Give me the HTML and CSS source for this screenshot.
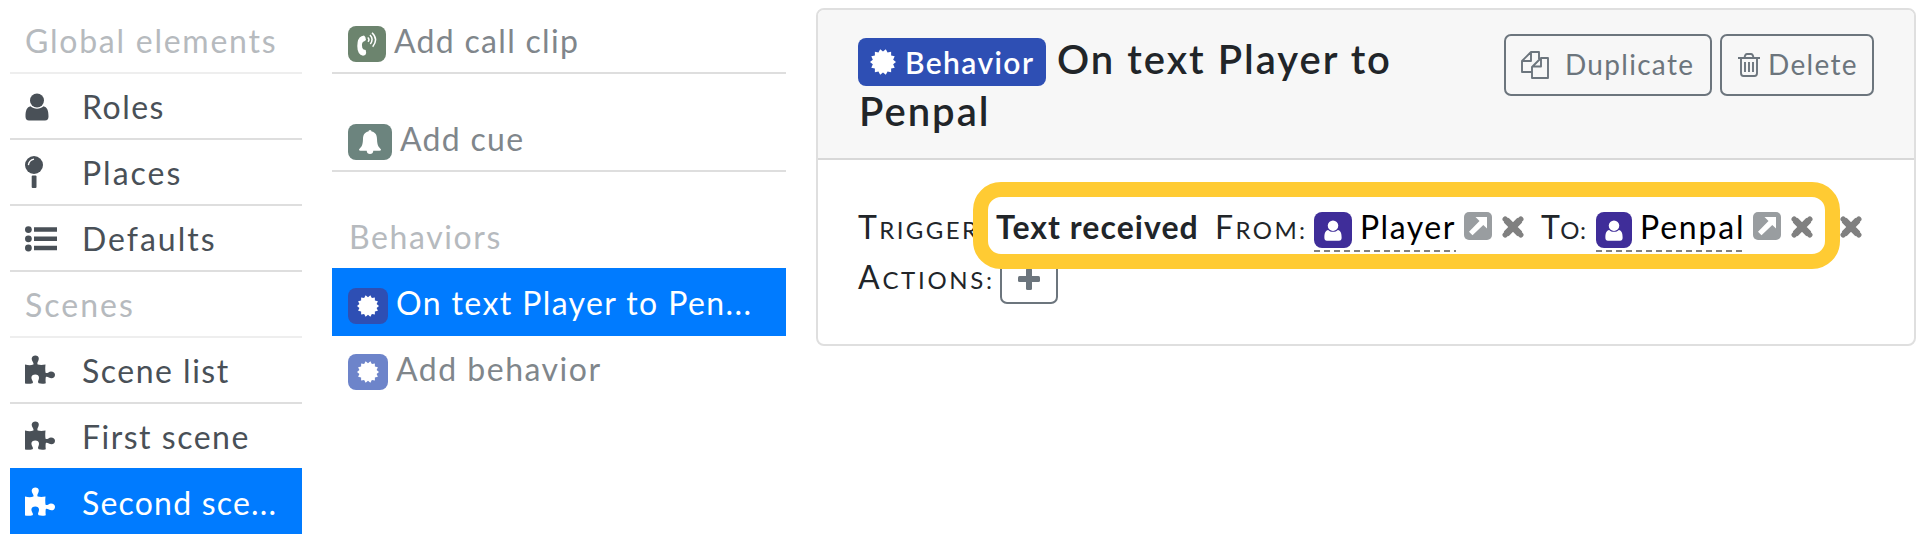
FILE: index.html
```html
<!DOCTYPE html>
<html lang="en">
<head>
<meta charset="utf-8">
<title>Scene editor</title>
<link rel="stylesheet" href="styles.css">
</head>
<body>
<svg class="defs" width="0" height="0">
  <symbol id="user" viewBox="0 0 24 28"><circle cx="12" cy="7.500" r="7"/><path d="M5.500 13.200C8.500 16.500 15.500 16.500 18.500 13.200C22 14 23.500 17 23.500 23.500Q23.500 27.500 20 27.500H4Q.5 27.500 .5 23.500C.5 17 2 14 5.500 13.200Z"/></symbol>
  <symbol id="pin" viewBox="0 0 18 32"><circle cx="9" cy="9" r="9"/><rect x="6.700" y="19.500" width="4.800" height="12.500" rx="1"/><path d="M3.400 9.200Q4 4.200 9 3.200" fill="none" stroke="#fff" stroke-width="1.300"/></symbol>
  <symbol id="list" viewBox="0 0 32 26"><circle cx="3.400" cy="3.600" r="3.400"/><circle cx="3.400" cy="12.800" r="3.400"/><circle cx="3.400" cy="22" r="3.400"/><path d="M9 1.300h23v4.500H9zM9 10.500h23V15H9zM9 19.700h23v4.500H9z"/></symbol>
  <symbol id="puzzle" viewBox="0 0 30 29"><path d="M0 9.500Q5 10.800 8.300 9.600C9.500 8.500 6.500 6 6.700 3.600C6.900 1.300 8.500 .5 10.300 .5C12.300 .5 13.800 1.500 13.800 3.600C13.800 6 11.500 8 12.700 9.500Q16 10.300 20.500 9.500Q20 14 20.500 17.500C21.700 19 23.500 16.700 26 16.400C28.500 16.400 30 17.700 30 19.800C30 22 28.700 23.300 26.500 23.300C24 23.300 22.500 20.800 20.800 22Q20.300 25 20.800 28.200Q17.500 29.200 13.700 28.300C12 26.500 14 25.300 14 22.700C14 20.500 12.500 19.400 10.300 19.400C8 19.400 6.400 20.500 6.400 22.700C6.400 25.200 9 26.700 7.500 28.300Q4 29.200 0 28.500Z"/></symbol>
  <symbol id="burst" viewBox="-12 -12 24 24"><path d="M0-9.600 2.600-11.700 4.200-8.700 7.500-9.400 7.500-6 10.800-5.200 9.400-2.100 12 0 9.400 2.100 10.800 5.200 7.500 6 7.500 9.400 4.200 8.700 2.600 11.700 0 9.600-2.600 11.700-4.200 8.700-7.500 9.400-7.500 6-10.800 5.200-9.400 2.100-12 0-9.400-2.100-10.800-5.200-7.500-6-7.500-9.400-4.200-8.700-2.600-11.700Z"/></symbol>
  <symbol id="call" viewBox="0 0 20 24"><path d="M4.500 4.200 7 3.500Q8.700 4.300 9 8L7 9.500Q5.200 9.500 4.900 13Q4.900 16.500 6.600 17.500L8.700 18Q9.800 21 8.300 23L6 23.700Q.3 22.500 .3 14Q.3 6 4.500 4.200Z"/><path d="M10.700 5.500Q13 7.500 11 9.800M13 3Q17 7 13.300 12M15 .7Q21.800 7.200 15.700 14.700" fill="none" stroke="currentColor" stroke-width="1.500"/></symbol>
  <symbol id="bell" viewBox="0 0 24 24"><path d="M12 0Q13.500 0 13.600 1.600C17.500 2.300 18.900 5.200 19 9C19.200 15.500 20.500 17 23 19.200Q23 20.700 21.500 20.700H15.300Q15 24 12 24T8.700 20.700H2.500Q1 20.700 1 19.200C3.500 17 4.800 15.500 5 9C5.100 5.200 6.500 2.300 10.400 1.600Q10.500 0 12 0Z"/></symbol>
  <symbol id="copy" viewBox="0 0 28 28"><path d="M11 21H1V10L10 1H18V8M10 1V10H1M20 7H27V27H11V16L20 7V15.500H11" fill="none" stroke="currentColor" stroke-width="1.900" stroke-linejoin="round"/></symbol>
  <symbol id="trash" viewBox="0 0 22 24"><path d="M0 5H22M6.500 5Q7 1 9 1H13Q15 1 15.500 5M3 5V20Q3 23 5.500 23H16.500Q19 23 19 20V5M7 9V19M11 9V19M15 9V19" fill="none" stroke="currentColor" stroke-width="1.900"/></symbol>
  <symbol id="cross" viewBox="0 0 22 22"><path d="M4.200 4.200 17.800 17.800M17.800 4.200 4.200 17.800" stroke="currentColor" stroke-width="6.800"/><path d="M3.200 3.200 18.800 18.800M18.800 3.200 3.200 18.800" stroke="currentColor" stroke-width="5.400" stroke-linecap="round"/></symbol>
  <symbol id="plus" viewBox="0 0 22 22"><rect x="8" width="6" height="22" rx="1.500"/><rect y="8" width="22" height="6" rx="1.500"/></symbol>
  <symbol id="open" viewBox="0 0 28 28"><rect width="28" height="28" rx="5"/><path d="M11.500 5H23V16.500L19.300 13 8.500 23.300 5 19.800 15.500 9Z" fill="#fff"/></symbol>
</svg>
<div class="app">
  <nav class="side">
    <div class="head t-global">Global elements</div>
    <div class="item"><span class="ico"><svg width="24" height="28"><use href="#user"/></svg></span><span>Roles</span></div>
    <div class="item"><span class="ico up"><svg width="18" height="32"><use href="#pin"/></svg></span><span class="t-wide">Places</span></div>
    <div class="item"><span class="ico"><svg width="32" height="26"><use href="#list"/></svg></span><span class="t-wide">Defaults</span></div>
    <div class="head t-wide">Scenes</div>
    <div class="item"><span class="ico puz"><svg width="30" height="29"><use href="#puzzle"/></svg></span><span>Scene list</span></div>
    <div class="item last"><span class="ico puz"><svg width="30" height="29"><use href="#puzzle"/></svg></span><span>First scene</span></div>
    <div class="item active"><span class="ico puz"><svg width="30" height="29"><use href="#puzzle"/></svg></span><span class="t-second">Second sce...</span></div>
  </nav>

  <div class="list">
    <div class="entry"><span class="chip call"><svg width="20" height="24"><use href="#call"/></svg></span><span class="t-call">Add call clip</span></div>
    <div class="entry spaced"><span class="chip cue"><svg width="24" height="24"><use href="#bell"/></svg></span><span class="t-cue">Add cue</span></div>
    <div class="group">Behaviors</div>
    <div class="entry active"><span class="chip beh"><svg width="22" height="22"><use href="#burst"/></svg></span><span class="t-on">On text Player to Pen...</span></div>
    <div class="entry plain"><span class="chip beh faded"><svg width="22" height="22"><use href="#burst"/></svg></span><span>Add behavior</span></div>
  </div>

  <main class="card">
    <header class="card-head">
      <h1 class="title"><span class="badge"><svg width="26" height="30"><use href="#burst"/></svg><span>Behavior</span></span><span>On text Player to</span><br><span class="name2">Penpal</span></h1>
      <div class="buttons">
        <button class="btn dup"><svg width="28" height="28"><use href="#copy"/></svg><span>Duplicate</span></button>
        <button class="btn del"><svg width="22" height="24"><use href="#trash"/></svg><span>Delete</span></button>
      </div>
    </header>
    <div class="card-body">
      <div class="row">
        <span class="sc w-trigger">Trigger:</span>
        <b class="w-text">Text received</b>
        <span class="sc w-from">From:</span>
        <a class="ref ref-player"><span class="chip role"><svg width="18" height="21"><use href="#user"/></svg></span><span>Player</span></a>
        <svg class="open" width="28" height="28"><use href="#open"/></svg>
        <svg class="x" width="22" height="22"><use href="#cross"/></svg>
        <span class="sc w-to">To:</span>
        <a class="ref ref-penpal"><span class="chip role"><svg width="18" height="21"><use href="#user"/></svg></span><span>Penpal</span></a>
        <svg class="open" width="28" height="28"><use href="#open"/></svg>
        <svg class="x" width="22" height="22"><use href="#cross"/></svg>
        <svg class="x end" width="22" height="22"><use href="#cross"/></svg>
      </div>
      <div class="row actions">
        <span class="sc w-actions">Actions:</span>
        <button class="btn add"><svg width="22" height="22"><use href="#plus"/></svg></button>
      </div>
      <div class="highlight"></div>
    </div>
  </main>
</div>
</body>
</html>
```
FILE: styles.css
```css
* { box-sizing: border-box; }
body { margin: 0; background: #fff; color: #212529; font: 32px/66px Lato, sans-serif; letter-spacing: 1.5px; white-space: nowrap; overflow: hidden; }
svg { display: block; fill: currentColor; flex: none; }
.defs { position: absolute; }
.app { display: flex; align-items: flex-start; height: 544px; padding: 8px 12px 0 10px; }

.side { width: 292px; margin-right: 30px; color: #495057; }
.head { height: 66px; padding-left: 15px; color: #b6babe; border-bottom: 2px solid #eee; }
.item { display: flex; height: 66px; padding-left: 15px; border-bottom: 2px solid #dedede; }
.item.last { height: 64px; border: 0; }
.item.active { border: 0; padding-top: 2px; background: #007bff; color: #fff; }
.ico { display: flex; align-items: center; width: 57px; height: 64px; padding-top: 2px; }
.ico.up { padding-top: 0; }
.ico.puz { padding: 0 0 1px; }

.list { width: 454px; margin-right: 30px; color: #80868b; }
.entry { display: flex; height: 66px; padding-left: 16px; border-bottom: 2px solid #dedede; }
.entry.spaced { margin-top: 32px; }
.entry.active { height: 68px; padding-top: 2px; border: 0; background: #007bff; color: #fff; }
.entry.plain { border: 0; }
.group { height: 64px; margin-top: 32px; padding-left: 17px; color: #b6babe; letter-spacing: 1.6px; }
.chip { display: flex; align-items: center; justify-content: center; flex: none; width: 40px; height: 36px; margin: 18px 8px 0 0; border-radius: 8px; color: #fff; }
.chip.call { width: 38px; background: #6c846e; }
.chip.cue { width: 44px; background: #6c847e; }
.chip.beh { background: #2e4fb4; }
.chip.faded { background: #6d84ca; }
.t-global { letter-spacing: 1.75px; }
.t-wide { letter-spacing: 2px; }
.t-second { letter-spacing: 1.2px; }
.t-call { letter-spacing: 1.3px; }
.t-cue { letter-spacing: 1.3px; }
.t-on { letter-spacing: 1.4px; }

.card { width: 1100px; height: 338px; border: 2px solid #dfdfdf; border-radius: 8px; }
.card-head { display: flex; justify-content: space-between; height: 150px; padding: 23px 40px 0; border-bottom: 2px solid #d8d8d8; border-radius: 6px 6px 0 0; background: #f7f7f7; }
.title { margin: 0; font-size: 40px; font-weight: 600; line-height: 52px; letter-spacing: 2px; }
.badge { display: inline-flex; align-items: center; vertical-align: -3px; width: 188px; height: 48px; margin: 0 11px -3px 0; padding-left: 12px; gap: 9px; border-radius: 8px; background: #2e4fb4; color: #fff; font-size: 30px; line-height: 48px; letter-spacing: 1.4px; }
.name2 { padding-left: 1px; }
.buttons { display: flex; gap: 8px; padding-top: 1px; }
.btn { display: flex; align-items: center; height: 62px; padding: 0; border: 2px solid #6c757d; border-radius: 7px; background: none; color: #6c757d; font: 28px/56px Lato, sans-serif; letter-spacing: 1.3px; }
.btn span { padding-bottom: 2px; }
.dup { width: 208px; padding-left: 15px; gap: 16px; }
.del { width: 154px; padding-left: 16px; gap: 8px; }

.card-body { position: relative; padding: 34px 40px 0; }
.row { display: flex; height: 64px; }
.row.actions { margin-top: -14px; }
.sc { font-size: 24px; text-transform: uppercase; letter-spacing: 2.4px; }
.sc::first-letter { font-size: 32px; }
.w-trigger { width: 138px; }
.w-text { width: 219px; letter-spacing: 1.05px; }
.w-from { width: 99px; }
.w-to { width: 55px; letter-spacing: .4px; }
.w-actions { width: 142px; letter-spacing: 2.7px; }
.ref { display: flex; height: 58px; color: #000; background: repeating-linear-gradient(90deg, #808080 0 6px, transparent 6px 10px) 0 100% / 100% 2px no-repeat; }
.ref-player { width: 142px; margin-right: 8px; }
.ref-penpal { width: 150px; margin-right: 7px; letter-spacing: 1.8px; }
.chip.role { width: 38px; background: #3f2d99; }
.ref-penpal .role { width: 36px; }
.open { margin: 18px 10px 0 0; color: #999da0; }
.x { margin: 22px 17px 0 0; color: #808080; }
.x.end { margin: 22px 0 0 10px; }
.add { width: 58px; height: 50px; justify-content: center; margin-top: 10px; }
.highlight { position: absolute; left: 155px; top: 22px; width: 867px; height: 87px; border: 15px solid #ffcb33; border-radius: 28px; }
```
